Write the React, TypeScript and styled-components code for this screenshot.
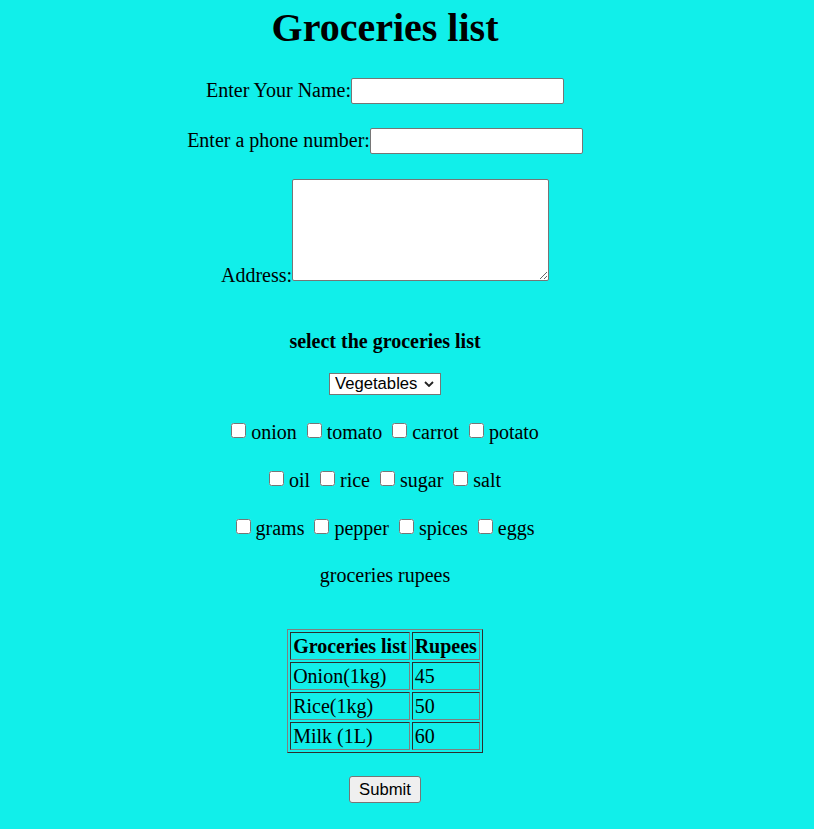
import React from "react";
import styled, { createGlobalStyle } from "styled-components";

const GlobalStyle = createGlobalStyle`
  html, body {
    margin: 0;
    padding: 0;
    background: #11efea;
  }
  body {
    font-family: "Liberation Serif", "Times New Roman", serif;
    font-size: 20px;
    color: #000;
  }
`;

const Page = styled.form`
  width: 770px;
  min-height: 829px;
  display: flex;
  flex-direction: column;
  align-items: center;
`;

const Title = styled.h1`
  margin: 5px 0 0;
  font-size: 40px;
  line-height: 46px;
  font-weight: bold;
`;

const FieldRow = styled.div<{ $top: number }>`
  display: flex;
  align-items: flex-end;
  margin-top: ${(p) => p.$top}px;
`;

const Label = styled.label<{ $drop: number }>`
  line-height: 23px;
  margin-bottom: ${(p) => p.$drop}px;
`;

const TextInput = styled.input`
  box-sizing: border-box;
  width: 213px;
  height: 26px;
  margin: 0;
  padding: 1px 2px;
  border: 1px solid #767676;
  border-radius: 2px;
  background: #fff;
  font-family: "Liberation Sans", Arial, sans-serif;
  font-size: 16.67px;
`;

const TextArea = styled.textarea`
  box-sizing: border-box;
  width: 257px;
  height: 102px;
  margin: 0;
  padding: 2px;
  border: 1px solid #767676;
  border-radius: 2px;
  background: #fff;
  font-family: "Liberation Mono", monospace;
  font-size: 16.67px;
`;

const SectionHeading = styled.div`
  margin-top: 49px;
  line-height: 23px;
  font-weight: bold;
`;

const SelectWrap = styled.div`
  position: relative;
  margin-top: 20px;
  width: 112px;
  height: 22px;
`;

const Select = styled.select`
  box-sizing: border-box;
  appearance: none;
  -webkit-appearance: none;
  display: block;
  margin: 0;
  width: 112px;
  height: 22px;
  padding: 0 0 0 5px;
  border: 1px solid #767676;
  border-radius: 0;
  background: #fff;
  color: #000;
  font-family: "Liberation Sans", Arial, sans-serif;
  font-size: 16.67px;
  line-height: 20px;
`;

const Chevron = styled.svg`
  position: absolute;
  right: 7px;
  top: 8px;
  pointer-events: none;
`;

const CheckRow = styled.div<{ $top: number }>`
  display: flex;
  justify-content: center;
  align-items: flex-end;
  gap: 10px;
  margin-top: ${(p) => p.$top}px;
  line-height: 23px;
`;

const CheckItem = styled.label`
  display: flex;
  align-items: flex-end;
  gap: 5px;
`;

const Box = styled.input`
  width: 15px;
  height: 15px;
  margin: 0 0 6px 0;
`;

const Caption = styled.div`
  margin-top: 24px;
  line-height: 23px;
`;

const PriceTable = styled.table`
  margin-top: 42px;
  border-collapse: separate;
  border-spacing: 2px;
  border: 1px solid;
  border-color: #808080 #2e2e2e #2e2e2e #808080;
`;

const HeadCell = styled.th`
  padding: 1.5px 2px;
  border: 1px solid;
  border-color: #2e2e2e #808080 #808080 #2e2e2e;
  text-align: left;
  line-height: 23px;
  font-size: 20px;
  font-weight: bold;
`;

const Cell = styled.td`
  padding: 1.5px 2px;
  border: 1px solid;
  border-color: #2e2e2e #808080 #808080 #2e2e2e;
  text-align: left;
  line-height: 23px;
  font-size: 20px;
`;

const SubmitButton = styled.button`
  box-sizing: border-box;
  margin-top: 23px;
  width: 72px;
  height: 27px;
  padding: 0;
  border: 1px solid #767676;
  border-radius: 3px;
  background: #efefef;
  color: #000;
  font-family: "Liberation Sans", Arial, sans-serif;
  font-size: 16.67px;
`;

const checkRows = [
  ["onion", "tomato", "carrot", "potato"],
  ["oil", "rice", "sugar", "salt"],
  ["grams", "pepper", "spices", "eggs"],
];

const prices = [
  ["Onion(1kg)", "45"],
  ["Rice(1kg)", "50"],
  ["Milk (1L)", "60"],
];

export default function App() {
  return (
    <>
      <GlobalStyle />
      <Page onSubmit={(e) => e.preventDefault()}>
        <Title>Groceries list</Title>
        <FieldRow $top={27}>
          <Label $drop={2}>Enter Your Name:</Label>
          <TextInput type="text" />
        </FieldRow>
        <FieldRow $top={24}>
          <Label $drop={2}>Enter a phone number:</Label>
          <TextInput type="text" />
        </FieldRow>
        <FieldRow $top={25}>
          <Label $drop={-6}>Address:</Label>
          <TextArea />
        </FieldRow>
        <SectionHeading>select the groceries list</SectionHeading>
        <SelectWrap>
          <Select defaultValue="Vegetables">
            <option>Vegetables</option>
            <option>Fruits</option>
            <option>Dairy</option>
          </Select>
          <Chevron width="10" height="6" viewBox="0 0 10 6">
            <path d="M1 1 L5 5 L9 1" fill="none" stroke="#222" strokeWidth="1.8" />
          </Chevron>
        </SelectWrap>
        {checkRows.map((row, i) => (
          <CheckRow key={i} $top={i === 0 ? 26 : 25}>
            {row.map((name) => (
              <CheckItem key={name}>
                <Box type="checkbox" />
                <span>{name}</span>
              </CheckItem>
            ))}
          </CheckRow>
        ))}
        <Caption>groceries rupees</Caption>
        <PriceTable>
          <thead>
            <tr>
              <HeadCell>Groceries list</HeadCell>
              <HeadCell>Rupees</HeadCell>
            </tr>
          </thead>
          <tbody>
            {prices.map(([item, price]) => (
              <tr key={item}>
                <Cell>{item}</Cell>
                <Cell>{price}</Cell>
              </tr>
            ))}
          </tbody>
        </PriceTable>
        <SubmitButton type="submit">Submit</SubmitButton>
      </Page>
    </>
  );
}
